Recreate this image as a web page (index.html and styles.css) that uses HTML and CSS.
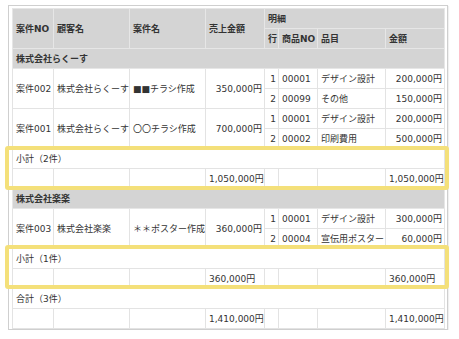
FILE: index.html
```html
<!DOCTYPE html>
<html lang="ja">
<head>
<meta charset="utf-8">
<link rel="stylesheet" href="styles.css">
</head>
<body>
<div class="frame">
  <table class="report">
    <colgroup>
      <col class="c1"><col class="c2"><col class="c3"><col class="c4">
      <col class="c5"><col class="c6"><col class="c7"><col class="c8">
    </colgroup>
    <thead>
      <tr>
        <th rowspan="2">案件NO</th>
        <th rowspan="2">顧客名</th>
        <th rowspan="2">案件名</th>
        <th rowspan="2">売上金額</th>
        <th colspan="4">明細</th>
      </tr>
      <tr>
        <th>行</th>
        <th>商品NO</th>
        <th>品目</th>
        <th>金額</th>
      </tr>
    </thead>
    <tbody>
      <tr class="group"><td colspan="8">株式会社らくーす</td></tr>
      <tr>
        <td rowspan="2">案件002</td>
        <td rowspan="2">株式会社らくーす</td>
        <td rowspan="2">■■チラシ作成</td>
        <td rowspan="2" class="num">350,000円</td>
        <td class="num">1</td><td>00001</td><td>デザイン設計</td><td class="num">200,000円</td>
      </tr>
      <tr>
        <td class="num">2</td><td>00099</td><td>その他</td><td class="num">150,000円</td>
      </tr>
      <tr>
        <td rowspan="2">案件001</td>
        <td rowspan="2">株式会社らくーす</td>
        <td rowspan="2">〇〇チラシ作成</td>
        <td rowspan="2" class="num">700,000円</td>
        <td class="num">1</td><td>00001</td><td>デザイン設計</td><td class="num">200,000円</td>
      </tr>
      <tr>
        <td class="num">2</td><td>00002</td><td>印刷費用</td><td class="num">500,000円</td>
      </tr>
      <tr><td colspan="8">小計（2件）</td></tr>
      <tr>
        <td></td><td></td><td></td><td class="num">1,050,000円</td>
        <td></td><td></td><td></td><td class="num">1,050,000円</td>
      </tr>
      <tr class="group"><td colspan="8">株式会社楽楽</td></tr>
      <tr>
        <td rowspan="2">案件003</td>
        <td rowspan="2">株式会社楽楽</td>
        <td rowspan="2">＊＊ポスター作成</td>
        <td rowspan="2" class="num">360,000円</td>
        <td class="num">1</td><td>00001</td><td>デザイン設計</td><td class="num">300,000円</td>
      </tr>
      <tr>
        <td class="num">2</td><td>00004</td><td>宣伝用ポスター</td><td class="num">60,000円</td>
      </tr>
      <tr><td colspan="8">小計（1件）</td></tr>
      <tr>
        <td></td><td></td><td></td><td>360,000円</td>
        <td></td><td></td><td></td><td>360,000円</td>
      </tr>
      <tr><td colspan="8">合計（3件）</td></tr>
      <tr>
        <td></td><td></td><td></td><td class="num">1,410,000円</td>
        <td></td><td></td><td></td><td class="num">1,410,000円</td>
      </tr>
    </tbody>
  </table>
  <div class="mark mark-1"></div>
  <div class="mark mark-2"></div>
</div>
</body>
</html>
```
FILE: styles.css
```css
html, body {
  margin: 0;
  padding: 0;
  background: #ffffff;
}

body {
  font-family: "DejaVu Sans", "Noto Sans CJK JP", sans-serif;
  font-size: 9px;
  color: #333333;
}

.frame {
  position: relative;
  box-sizing: border-box;
  width: 440px;
  height: 325px;
  margin: 5px 0 0 8px;
  padding: 2px 2px 0 3px;
  border: 1px solid #cfcfcf;
  box-shadow: 1px 1px 1px rgba(0, 0, 0, 0.06);
}

.report {
  width: 432px;
  table-layout: fixed;
  border-collapse: collapse;
}

.c1 { width: 41px; }
.c2 { width: 76px; }
.c3 { width: 76px; }
.c4 { width: 59px; }
.c5 { width: 14px; }
.c6 { width: 39px; }
.c7 { width: 68px; }
.c8 { width: 59px; }

.report th,
.report td {
  height: 19px;
  padding: 0 3px;
  border: 1px solid #e3e3e3;
  text-align: left;
  vertical-align: middle;
  white-space: nowrap;
  overflow: hidden;
  line-height: 12px;
}

.report th {
  background: #d4d4d4;
  font-weight: bold;
  border-color: #e6e6e6;
}

.report .group td {
  background: #d4d4d4;
  font-weight: bold;
  border-color: #e6e6e6;
}

.report .num {
  text-align: right;
  padding-right: 2px;
}

.mark {
  position: absolute;
  left: -4px;
  width: 444px;
  height: 44px;
  box-sizing: border-box;
  border: 4px solid #f4e07a;
  border-radius: 3px;
  pointer-events: none;
}

.mark-1 { top: 140px; }
.mark-2 { top: 239px; }
```
